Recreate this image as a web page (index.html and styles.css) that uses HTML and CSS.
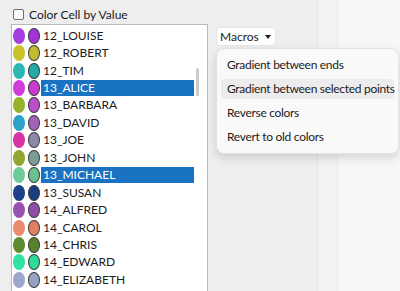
FILE: index.html
```html
<!DOCTYPE html>
<html lang="en">
<head>
    <meta charset="UTF-8">
    <title>Color Cell by Value</title>
    <link rel="stylesheet" href="styles.css">
</head>
<body>
    <div class="main">
        <label class="check-row">
            <span class="checkbox"></span>
            <span>Color Cell by Value</span>
        </label>

        <div class="content">
            <div class="listbox">
                <div class="row"><span class="dot" style="background:#a43ddf"></span><span class="dot ring" style="background:#a334dc"></span><span class="name">12_LOUISE</span></div>
                <div class="row"><span class="dot" style="background:#c7c22c"></span><span class="dot ring" style="background:#c1bc2e"></span><span class="name">12_ROBERT</span></div>
                <div class="row"><span class="dot" style="background:#2bb7b2"></span><span class="dot ring" style="background:#25aaa6"></span><span class="name">12_TIM</span></div>
                <div class="row"><span class="dot" style="background:#d33bd8"></span><span class="dot ring" style="background:#c83ad0"></span><span class="name selected">13_ALICE</span></div>
                <div class="row"><span class="dot" style="background:#95b22c"></span><span class="dot ring" style="background:#b84ec8"></span><span class="name">13_BARBARA</span></div>
                <div class="row"><span class="dot" style="background:#2ba2c8"></span><span class="dot ring" style="background:#a062ba"></span><span class="name">13_DAVID</span></div>
                <div class="row"><span class="dot" style="background:#d834a6"></span><span class="dot ring" style="background:#8d87a8"></span><span class="name">13_JOE</span></div>
                <div class="row"><span class="dot" style="background:#92a52e"></span><span class="dot ring" style="background:#7a9c92"></span><span class="name">13_JOHN</span></div>
                <div class="row"><span class="dot" style="background:#6ccb98"></span><span class="dot ring" style="background:#69c290"></span><span class="name selected">13_MICHAEL</span></div>
                <div class="row"><span class="dot" style="background:#1c418a"></span><span class="dot ring" style="background:#193e82"></span><span class="name">13_SUSAN</span></div>
                <div class="row"><span class="dot" style="background:#9a52b0"></span><span class="dot ring" style="background:#914ea8"></span><span class="name">14_ALFRED</span></div>
                <div class="row"><span class="dot" style="background:#e88b6f"></span><span class="dot ring" style="background:#e17f62"></span><span class="name">14_CAROL</span></div>
                <div class="row"><span class="dot" style="background:#5f8b30"></span><span class="dot ring" style="background:#5a822e"></span><span class="name">14_CHRIS</span></div>
                <div class="row"><span class="dot" style="background:#31e2a2"></span><span class="dot ring" style="background:#2fd99a"></span><span class="name">14_EDWARD</span></div>
                <div class="row"><span class="dot" style="background:#9ba6cd"></span><span class="dot ring" style="background:#96a1c8"></span><span class="name">14_ELIZABETH</span></div>
                <div class="scroll-thumb"></div>
            </div>

            <div class="macros">
                <button class="macros-btn">Macros
                    <svg class="caret" width="6" height="4" viewBox="0 0 6 4"><path d="M0 0h6L3 4z" fill="#1b1b1b"/></svg>
                </button>
                <div class="menu">
                    <div class="menu-item">Gradient between ends</div>
                    <div class="menu-item active">Gradient between selected points</div>
                    <div class="menu-item">Reverse colors</div>
                    <div class="menu-item">Revert to old colors</div>
                </div>
            </div>
        </div>
    </div>
    <div class="strip"></div>
    <div class="rest"></div>
</body>
</html>
```

FILE: styles.css
```css
body {
    margin: 0;
    height: 291px;
    display: flex;
    font-family: Lato, sans-serif;
    font-size: 12px;
    color: #1b1b1b;
    background-color: #eeeeee;
    overflow: hidden;
}
.main {
    width: 317px;
    padding: 8px 0 0 11px;
    box-sizing: border-box;
}
.strip {
    width: 19px;
    background-color: #f2f2f2;
    border-left: 1px solid #e6e6e6;
    border-right: 1px solid #e8e8e8;
}
.rest {
    flex: 1;
    background-color: #f7f7f7;
}
.check-row {
    display: flex;
    align-items: center;
    gap: 5px;
    height: 13px;
    margin-left: 2px;
    line-height: 13px;
}
.checkbox {
    width: 9px;
    height: 9px;
    border: 1px solid #6f6f6f;
    border-radius: 2px;
    background-color: #fbfbfb;
}
.content {
    display: flex;
    align-items: flex-start;
    margin-top: 3px;
}
.listbox {
    position: relative;
    width: 195px;
    height: 264px;
    padding-top: 2px;
    box-sizing: content-box;
    background-color: #fff;
    border: 1px solid #b9b9b9;
    overflow: hidden;
}
.row {
    display: flex;
    align-items: center;
    height: 17.45px;
    padding-left: 1px;
}
.dot {
    width: 12px;
    height: 16px;
    border-radius: 50%;
    box-sizing: border-box;
    margin-right: 3px;
    flex-shrink: 0;
}
.dot.ring {
    width: 12px;
    border: 1px solid #3a3a3a;
    margin-right: 1px;
}
.name {
    width: 151px;
    height: 16px;
    line-height: 16px;
    padding-left: 2px;
}
.name.selected {
    background-color: #1a72c2;
    color: #fff;
}
.scroll-thumb {
    position: absolute;
    right: 8px;
    top: 43px;
    width: 3px;
    height: 28px;
    border-radius: 2px;
    background-color: #cbcbcb;
}
.macros {
    position: relative;
    margin-left: 8px;
    margin-top: 3px;
}
.macros-btn {
    display: flex;
    align-items: center;
    gap: 6px;
    font: inherit;
    color: #1b1b1b;
    height: 19px;
    padding: 0 4px 0 3px;
    white-space: nowrap;
    background-color: #fff;
    border: 1px solid #e6e6e6;
    border-radius: 4px;
}
.menu {
    position: absolute;
    left: 0;
    top: 21px;
    width: 181px;
    padding: 4px 0;
    background-color: #f9f9f9;
    border: 1px solid #e2e2e2;
    border-radius: 8px;
    box-shadow: 0 4px 10px rgba(0, 0, 0, 0.14);
}
.menu-item {
    height: 24px;
    line-height: 24px;
    margin: 0 4px;
    padding-left: 6px;
    border-radius: 4px;
    white-space: nowrap;
    letter-spacing: -0.3px;
}
.menu-item.active {
    background-color: #ececec;
    height: 20px;
    line-height: 20px;
    margin-top: 2px;
    margin-bottom: 2px;
}
```
